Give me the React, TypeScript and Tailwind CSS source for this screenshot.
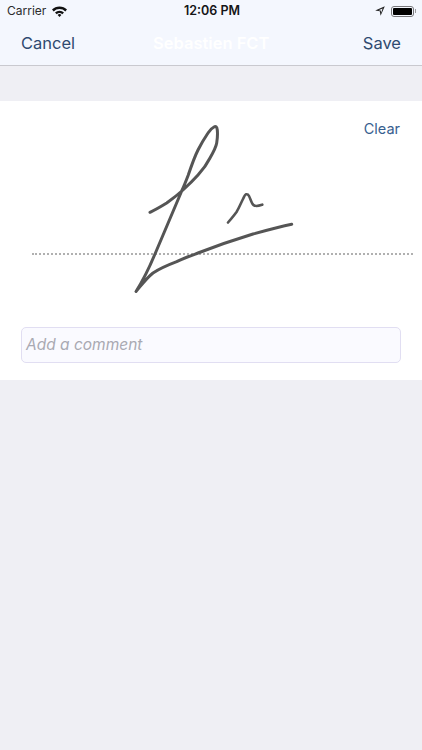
const App = () => {
	return (
		<div className="w-[422px] h-[750px] flex flex-col bg-[#efeff4] font-['Inter','Liberation_Sans',sans-serif] overflow-hidden">
			<div className="h-[66px] flex flex-col bg-[#f4f7fe] border-b border-[#c9c9cf]">
				<div className="h-[22px] flex items-center justify-between pl-[7px] pr-[6px] relative">
					<div className="flex items-center gap-[6px]">
						<span className="text-[12px] text-[#2b2b2d]">Carrier</span>
						<svg width="15" height="11" viewBox="0 0 15 11">
							<path d="M0 3.6 A10.5 10.5 0 0 1 15 3.6 L13.3 5.4 A8 8 0 0 0 1.7 5.4 Z" fill="#111" />
							<path d="M3 6.6 A6.2 6.2 0 0 1 12 6.6 L10.3 8.3 A4 4 0 0 0 4.7 8.3 Z" fill="#111" />
							<path d="M5.6 9 A2.6 2.6 0 0 1 9.4 9 L7.5 11 Z" fill="#111" />
						</svg>
					</div>
					<span className="absolute left-[184px] text-[12.5px] font-semibold text-[#151517]">12:06 PM</span>
					<div className="flex items-center gap-[6px]">
						<svg width="10" height="10" viewBox="0 0 10 10">
							<path d="M9.8 0.2 L0.2 4.4 L4.8 5.2 L5.6 9.8 Z M7.6 2.4 L3.6 4.2 L5.8 4.6 L6.1 6.8 Z" fill="#222" fillRule="evenodd" />
						</svg>
						<div className="flex items-center">
							<div className="w-[23px] h-[11px] rounded-[3px] border border-[#77777b] p-[1px]">
								<div className="w-full h-full rounded-[1px] bg-black" />
							</div>
							<div className="w-[1px] h-[4px] ml-[1px] bg-[#99999d]" />
						</div>
					</div>
				</div>
				<div className="flex-1 flex items-center justify-between pl-[21px] pr-[21px] text-[16.5px] text-[#2f4a70] relative">
					<span>Cancel</span>
					<span className="absolute left-[153px] font-semibold text-white">Sebastien FCT</span>
					<span>Save</span>
				</div>
			</div>

			<div className="mt-[35px] bg-white flex flex-col">
				<div className="relative h-[226px]">
					<span className="absolute top-[17px] right-[22px] text-[14.5px] text-[#38608f]">Clear</span>
					<div className="absolute left-[32px] right-[9px] top-[152px] border-t-2 border-dotted border-[#b0b0b0]" />
					<svg className="absolute left-0 top-[-101px]" width="422" height="330" viewBox="0 0 422 330" fill="none">
						<path
							d="M150 212.3 C156 209.5 161 206.5 166.7 203 C173 198.5 178 194.5 183 190 C189 184.5 193.5 180 198 175 C203 169.5 207 164 210 158 C214 151 216.2 146 216.7 143 C217.5 138 217.6 133 217.3 130 C217 126.5 215.5 126 214 127 C211 128.5 209.5 130.5 208 133 C204 139 201 144 198 150 C194 158 191 167 188.3 175 C186 181 184 186 181.7 191 L155 254 C150 266 144 279 136 291.5 C140 287 146 278.5 153 273 C160 268.5 168 265 176.7 261.7 C183 258.5 190 256 198 253 C216 246 235 239.5 253 234 C266 230.5 279 227 291.7 224.3"
							stroke="#555555"
							strokeWidth="3"
							strokeLinecap="round"
							strokeLinejoin="round"
						/>
						<path
							d="M228 222.5 C231 219 234 215.5 236.7 211.7 C239 208 241 203 243 199 C244 197 245 194.5 246 194.3 C247.5 194 248.5 195 249 196 C250 198 251 201 252 203 C253 205.5 254.5 206 256.5 206 C258.5 206 260.5 205.3 262.3 204.7"
							stroke="#555555"
							strokeWidth="2.6"
							strokeLinecap="round"
							strokeLinejoin="round"
						/>
					</svg>
				</div>
				<div className="mx-[21px] mb-[17px] h-[36px] flex items-center px-[4px] rounded-[5px] border border-[#e1def2] bg-[#fafaff]">
					<span className="text-[15.5px] italic text-[#a9a9b2]">Add a comment</span>
				</div>
			</div>
		</div>
	)
}

export default App
